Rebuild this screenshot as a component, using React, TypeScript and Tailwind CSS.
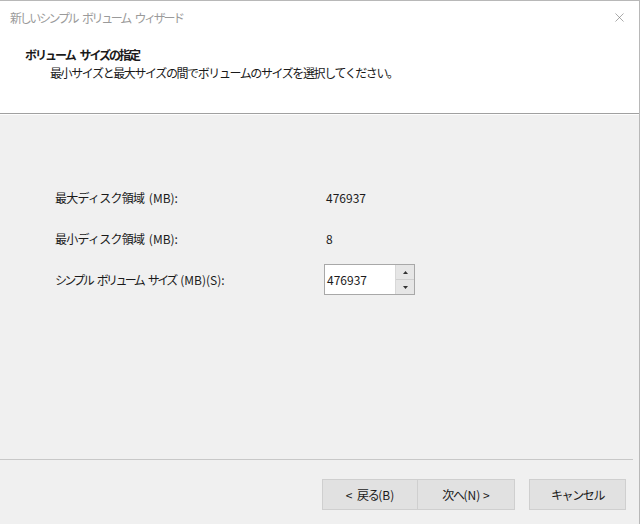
import { X } from "lucide-react";

const font = { fontFamily: '"Noto Sans CJK JP", "Noto Sans", sans-serif' };

const J = ({ text, t = "tracking-[-1.4px]" }: { text: string; t?: string }) => {
  const parts = text.split(/([\u3000-\u30ff\u4e00-\u9fff\uff00-\uffef]+)/);
  const padded = (i: number) => i > 0 && parts[i].startsWith(" ");
  return (
    <>
      {parts.map((p, i) =>
        i % 2 === 1 ? (
          <span
            key={i}
            className={parts[i - 1].endsWith(" ") && !padded(i - 1) ? `${t} ml-[2px]` : t}
          >
            {p}
          </span>
        ) : (
          <span key={i} className={padded(i) ? "whitespace-pre pl-[2px]" : "whitespace-pre"}>
            {p}
          </span>
        )
      )}
    </>
  );
};

const rows = [
  { label: "最大ディスク領域 (MB):", value: "476937" },
  { label: "最小ディスク領域 (MB):", value: "8" },
];

export default function App() {
  return (
    <div
      className="w-[640px] h-[524px] bg-white flex flex-col border-t border-r border-[#b8b8b8] text-[12px] text-[#1a1a1a]"
      style={font}
    >
      {/* Title bar */}
      <div className="h-[33px] flex items-center justify-between pl-[10px] pr-[12px] text-[#9a9a9a]">
        <span>
          <J text="新しいシンプル ボリューム ウィザード" t="tracking-[-2.35px]" />
        </span>
        <X className="w-[15px] h-[15px] text-[#777]" strokeWidth={1} />
      </div>

      {/* Header */}
      <div className="h-[79px] pl-[25px] pt-[12px]">
        <div className="font-bold leading-[18px]">
          <J text="ボリューム サイズの指定" t="tracking-[-2px]" />
        </div>
        <div className="pl-[25px] leading-[18px]">
          <J text="最小サイズと最大サイズの間でボリュームのサイズを選択してください。" />
        </div>
      </div>
      <div className="h-px bg-[#a0a0a0]" />
      <div className="h-px bg-[#fdfdfd]" />

      {/* Body */}
      <div className="flex-1 bg-[#f0f0f0] flex flex-col">
        <div className="flex-1 pt-[74px] pl-[55px] flex flex-col gap-[23px]">
          {rows.map((r) => (
            <div key={r.label} className="flex items-center h-[18px]">
              <span className="w-[271px]">
                <J text={r.label} t="tracking-[-0.75px]" />
              </span>
              <span>{r.value}</span>
            </div>
          ))}
          <div className="flex items-center -mt-[7px]">
            <span className="w-[269px]">
              <J text="シンプル ボリューム サイズ (MB)(S):" t="tracking-[-2.65px]" />
            </span>
            <div className="flex h-[31px] w-[91px] border border-[#a8a8a8] bg-white">
              <div className="flex-1 flex items-center pl-[2px]">476937</div>
              <div className="w-[19px] flex flex-col border-l border-[#d8d8d8]">
                <div className="flex-1 bg-[#e6e6e6] border-b border-[#d0d0d0] flex items-center justify-center">
                  <svg width="5" height="3" viewBox="0 0 5 3"><path d="M2.5 0 L5 3 L0 3 Z" fill="#333" /></svg>
                </div>
                <div className="flex-1 bg-[#e6e6e6] flex items-center justify-center">
                  <svg width="5" height="3" viewBox="0 0 5 3"><path d="M0 0 L5 0 L2.5 3 Z" fill="#333" /></svg>
                </div>
              </div>
            </div>
          </div>
        </div>

        {/* Footer */}
        <div className="mr-[6px] h-px bg-[#c8c8c8]" />
        <div className="h-[64px] flex items-start pt-[19px] pl-[322px]">
          <button className="w-[96px] h-[31px] bg-[#e1e1e1] border border-[#cfcfcf]">
            <J text="< 戻る(B)" />
          </button>
          <button className="w-[97px] h-[31px] bg-[#e1e1e1] border border-l-0 border-[#cfcfcf]">
            <J text="次へ(N) >" />
          </button>
          <button className="ml-[14px] w-[97px] h-[31px] bg-[#e1e1e1] border border-[#cfcfcf]">
            <J text="キャンセル" />
          </button>
        </div>
      </div>
    </div>
  );
}
